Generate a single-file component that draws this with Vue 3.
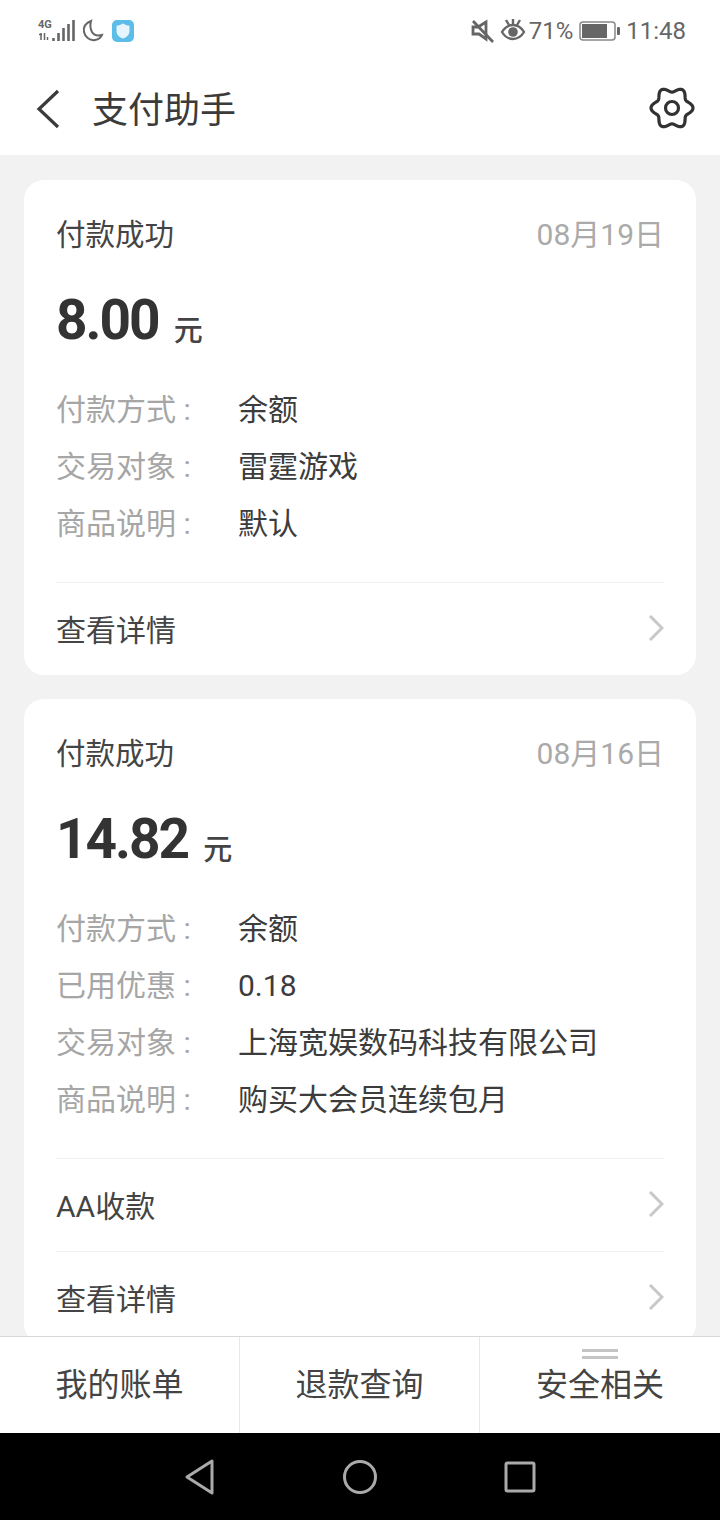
<script setup>
const cards = [
  {
    date: "08月19日",
    amount: "8.00",
    rows: [
      ["付款方式 :", "余额"],
      ["交易对象 :", "雷霆游戏"],
      ["商品说明 :", "默认"],
    ],
    links: ["查看详情"],
  },
  {
    date: "08月16日",
    amount: "14.82",
    rows: [
      ["付款方式 :", "余额"],
      ["已用优惠 :", "0.18"],
      ["交易对象 :", "上海宽娱数码科技有限公司"],
      ["商品说明 :", "购买大会员连续包月"],
    ],
    links: ["AA收款", "查看详情"],
  },
];

const tabs = ["我的账单", "退款查询", "安全相关"];

// six soft lobes round the centre of the settings icon
const gearPath = () => {
  const pts = [];
  for (let i = 0; i < 96; i++) {
    const a = (i / 96) * Math.PI * 2;
    const r = 18.4 + 2.6 * Math.cos(6 * a);
    pts.push((23 + r * Math.cos(a)).toFixed(2) + " " + (23 + r * Math.sin(a)).toFixed(2));
  }
  return "M" + pts.join("L") + "Z";
};
</script>

<template>
  <div class="page">
    <div class="status">
      <div class="status-left">
        <svg class="signal" width="38" height="24" viewBox="0 0 38 24">
          <text x="0" y="10" class="net">4G</text>
          <path d="M1 16.500h3M3 15v7M6.500 15v7M9.500 19v3" stroke="#666" stroke-width="1.500" fill="none" />
          <path d="M15.500 20v3M20.500 15v8M25.500 10v13M30.500 6v17M35.500 2v21" stroke="#666" stroke-width="2.600" fill="none" />
        </svg>
        <svg class="moon" width="24" height="24" viewBox="0 0 24 24">
          <path d="M10 2C5 4 2 8 3 13c1 5 6 9 11 8 3-.5 6-2.300 7-5-4 1-8 .5-10-3-1.800-3.500-2-7.500-1-11z" fill="none" stroke="#666" stroke-width="2" />
        </svg>
        <svg class="shield" width="22" height="22" viewBox="0 0 22 22">
          <rect width="22" height="22" rx="5" fill="#5bbde8" />
          <path d="M11 3.500c2 1.300 4 2 6.500 2.200V11c0 4-3 6.300-6.500 7.500C7.500 17.300 4.500 15 4.500 11V5.700C7 5.500 9 4.800 11 3.500z" fill="#e6f4fb" />
        </svg>
      </div>
      <div class="status-right">
        <svg class="mute" width="24" height="26" viewBox="0 0 24 26">
          <path d="M2 9h5l8-5v17l-7-5H2z" fill="none" stroke="#666" stroke-width="2.800" />
          <path d="M2 3l20 21" stroke="#666" stroke-width="2.800" />
        </svg>
        <svg class="eye" width="26" height="22" viewBox="0 0 26 22">
          <path d="M2 13c3-5 7-7 11-7s8 2 11 7c-3 5-7 7-11 7s-8-2-11-7z" fill="none" stroke="#666" stroke-width="2.400" />
          <circle cx="13" cy="13" r="4.800" fill="#666" />
          <path d="M6 1l3 5M13 0v5M20 1l-3 5" stroke="#666" stroke-width="2.400" />
        </svg>
        <span class="pct">71%</span>
        <svg class="battery" width="42" height="20" viewBox="0 0 42 20">
          <rect x="1" y="1" width="35" height="18" rx="3" fill="none" stroke="#888" stroke-width="1.500" />
          <rect x="3" y="3" width="25" height="14" fill="#666" />
          <rect x="38" y="6" width="3" height="8" rx="1" fill="#666" />
        </svg>
        <span class="time">11:48</span>
      </div>
    </div>

    <div class="header">
      <svg class="back" width="26" height="40" viewBox="0 0 26 40">
        <path d="M23 2L4 20l19 18" fill="none" stroke="#3b3b3b" stroke-width="3.200" />
      </svg>
      <span class="title">支付助手</span>
      <svg class="gear" width="46" height="46" viewBox="0 0 46 46">
        <path :d="gearPath()" fill="none" stroke="#333" stroke-width="3.200" stroke-linejoin="round" />
        <circle cx="23" cy="23" r="6.500" fill="none" stroke="#333" stroke-width="3.200" />
      </svg>
    </div>

    <div class="list">
      <div v-for="card in cards" :key="card.date" class="card">
        <div class="card-top">
          <span class="state">付款成功</span>
          <span class="date">{{ card.date }}</span>
        </div>
        <div class="amount-row">
          <span class="amount">{{ card.amount }}</span>
          <span class="unit">元</span>
        </div>
        <div class="rows">
          <div v-for="row in card.rows" :key="row[0]" class="row">
            <span class="label">{{ row[0] }}</span>
            <span class="value">{{ row[1] }}</span>
          </div>
        </div>
        <div v-for="link in card.links" :key="link" class="link">
          <span>{{ link }}</span>
          <svg width="16" height="26" viewBox="0 0 16 26">
            <path d="M2 1l12 12L2 25" fill="none" stroke="#c8c8c8" stroke-width="3" />
          </svg>
        </div>
      </div>
    </div>

    <div class="tabs">
      <div v-for="(tab, i) in tabs" :key="tab" class="tab">
        <span v-if="i === 2" class="tab-mark"></span>
        {{ tab }}
      </div>
    </div>

    <div class="nav">
      <svg width="32" height="36" viewBox="0 0 32 36">
        <path d="M28 2v32L3 18z" fill="none" stroke="#aaa" stroke-width="3" stroke-linejoin="round" />
      </svg>
      <svg width="36" height="36" viewBox="0 0 36 36">
        <circle cx="18" cy="18" r="15.500" fill="none" stroke="#aaa" stroke-width="3" />
      </svg>
      <svg width="32" height="32" viewBox="0 0 32 32">
        <rect x="2" y="2" width="28" height="28" rx="1.500" fill="none" stroke="#aaa" stroke-width="3" />
      </svg>
    </div>
  </div>
</template>

<style scoped>
.page {
  width: 720px;
  height: 1520px;
  display: flex;
  flex-direction: column;
  background: #f2f2f2;
  font-family: Roboto, "Noto Sans CJK SC", sans-serif;
  overflow: hidden;
}

.status {
  height: 62px;
  background: #fff;
  display: flex;
  justify-content: space-between;
  align-items: center;
  padding: 0 34px 0 38px;
  flex: none;
  box-sizing: border-box;
}

.status-left,
.status-right {
  display: flex;
  align-items: center;
}

.signal {
  margin-top: -3px;
}

.net {
  font-size: 11px;
  font-weight: 700;
  fill: #666;
}

.moon {
  margin-left: 5px;
  margin-top: -1px;
}

.shield {
  margin-left: 7px;
  margin-top: -1px;
}

.mute {
  margin-top: -1px;
}

.eye {
  margin-left: 5px;
  margin-top: -3px;
}

.pct {
  font-size: 24px;
  color: #666;
  margin-left: 3px;
}

.battery {
  margin-left: 6px;
  margin-top: -1px;
}

.time {
  font-size: 24px;
  color: #666;
  margin-left: 5px;
}

.header {
  height: 93px;
  flex: none;
  background: #fff;
  display: flex;
  align-items: center;
  padding: 0 25px 0 35px;
}

.title {
  font-size: 36px;
  color: #3b3b3b;
  margin-left: 31px;
  flex: 1;
  margin-top: -4px;
}

.gear {
  margin-top: -1px;
}

.list {
  flex: 1;
  min-height: 0;
  overflow: hidden;
  padding: 25px 24px 0;
  display: flex;
  flex-direction: column;
  gap: 24px;
}

.card {
  flex: none;
  background: #fff;
  border-radius: 20px;
  padding: 0 32px;
}

.card-top {
  display: flex;
  justify-content: space-between;
  align-items: center;
  height: 44px;
  margin-top: 30px;
}

.state {
  font-size: 29.5px;
  color: #444;
}

.date {
  font-size: 30px;
  color: #aaa;
}

.amount-row {
  display: flex;
  align-items: flex-end;
  height: 66px;
  margin-top: 33px;
}

.amount {
  font-size: 55px;
  line-height: 66px;
  font-weight: 700;
  letter-spacing: -2px;
  color: #333;
}

.unit {
  font-size: 29px;
  line-height: 44px;
  font-weight: 500;
  color: #444;
  margin-left: 15px;
}

.rows {
  margin-top: 28px;
  margin-bottom: 30px;
}

.row {
  display: flex;
  line-height: 57px;
  height: 57px;
  font-size: 30px;
}

.label {
  width: 182px;
  color: #a6a6a6;
  flex: none;
}

.value {
  color: #3c3c3c;
}

.link {
  height: 93px;
  box-sizing: border-box;
  padding-bottom: 3px;
  border-top: 1px solid #efefef;
  display: flex;
  justify-content: space-between;
  align-items: center;
  font-size: 30px;
  color: #444;
}

.tabs {
  flex: none;
  height: 96px;
  background: #fff;
  border-top: 1px solid #d8d8d8;
  display: flex;
  position: relative;
}

.tab {
  flex: 0 0 240px;
  box-sizing: border-box;
  padding-bottom: 6px;
  position: relative;
  display: flex;
  align-items: center;
  justify-content: center;
  font-size: 32px;
  color: #444;
  border-right: 1px solid #e8e8e8;
}

.tab:last-child {
  border-right: none;
}

.tab-mark {
  position: absolute;
  top: 12px;
  left: 50%;
  width: 36px;
  height: 10px;
  margin-left: -18px;
  border-top: 3px solid #c4c4c4;
  border-bottom: 3px solid #c4c4c4;
  box-sizing: border-box;
}

.nav {
  flex: none;
  height: 87px;
  background: #000;
  display: flex;
  align-items: center;
  justify-content: center;
  gap: 126px;
}
</style>

<style>
html,
body {
  margin: 0;
  background: #f2f2f2;
}
</style>
